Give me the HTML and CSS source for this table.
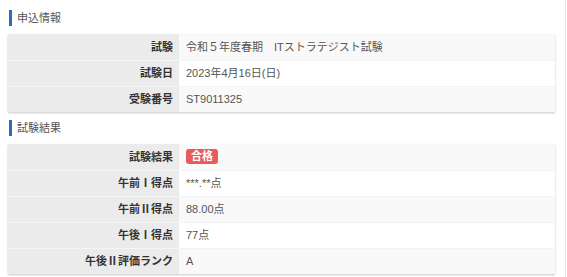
FILE: index.html
```html
<!DOCTYPE html>
<html lang="ja">
<head>
<meta charset="utf-8">
<link rel="stylesheet" href="styles.css">
</head>
<body>
<div class="page">
  <h2 class="sec-title">申込情報</h2>
  <table class="info">
    <tr><th>試験</th><td>令和５年度春期　ITストラテジスト試験</td></tr>
    <tr><th>試験日</th><td>2023年4月16日(日)</td></tr>
    <tr><th>受験番号</th><td>ST9011325</td></tr>
  </table>
  <h2 class="sec-title">試験結果</h2>
  <table class="info">
    <tr><th>試験結果</th><td><span class="badge">合格</span></td></tr>
    <tr><th>午前Ⅰ得点</th><td>***.**点</td></tr>
    <tr><th>午前Ⅱ得点</th><td>88.00点</td></tr>
    <tr><th>午後Ⅰ得点</th><td>77点</td></tr>
    <tr><th>午後Ⅱ評価ランク</th><td>A</td></tr>
  </table>
</div>
</body>
</html>
```
FILE: styles.css
```css
html, body {
  margin: 0;
  padding: 0;
  background: #fff;
}
body {
  font-family: "Liberation Sans", "Noto Sans CJK JP", sans-serif;
  font-size: 11px;
  color: #555;
}
.page {
  width: 566px;
  height: 277px;
  box-sizing: border-box;
  padding: 10px 10px 0 8px;
  border-right: 1px solid #e6e6e6;
}
.sec-title {
  margin: 0 0 8px 1px;
  padding-left: 5px;
  border-left: 3px solid #2d6db4;
  font-size: 11px;
  font-weight: normal;
  line-height: 16px;
  height: 16px;
  color: #555;
}
.info + .sec-title {
  margin-top: 8px;
}
.info {
  width: 547px;
  border-collapse: collapse;
  box-shadow: 0 1px 2px rgba(0, 0, 0, 0.22);
}
.info th,
.info td {
  height: 26px;
  box-sizing: border-box;
  padding: 0;
  border-top: 1px solid #f3f3f3;
  line-height: 16px;
  vertical-align: middle;
}
.info tr:first-child th,
.info tr:first-child td {
  border-top: none;
}
.info th {
  width: 171px;
  padding-right: 6px;
  text-align: right;
  font-weight: bold;
  background: #ebebeb;
  color: #333;
  border-top-color: #f5f5f5;
}
.info td {
  padding-left: 7px;
  text-align: left;
  background: #fff;
  color: #555;
}
.info tr:nth-child(odd) td {
  background: #f9f9f9;
}
.badge {
  display: inline-block;
  padding: 0 5px;
  height: 15px;
  line-height: 15px;
  border-radius: 3px;
  background: #e95b5b;
  color: #fff;
  font-weight: bold;
  font-size: 11px;
  vertical-align: middle;
  position: relative;
  top: -1px;
}
```
